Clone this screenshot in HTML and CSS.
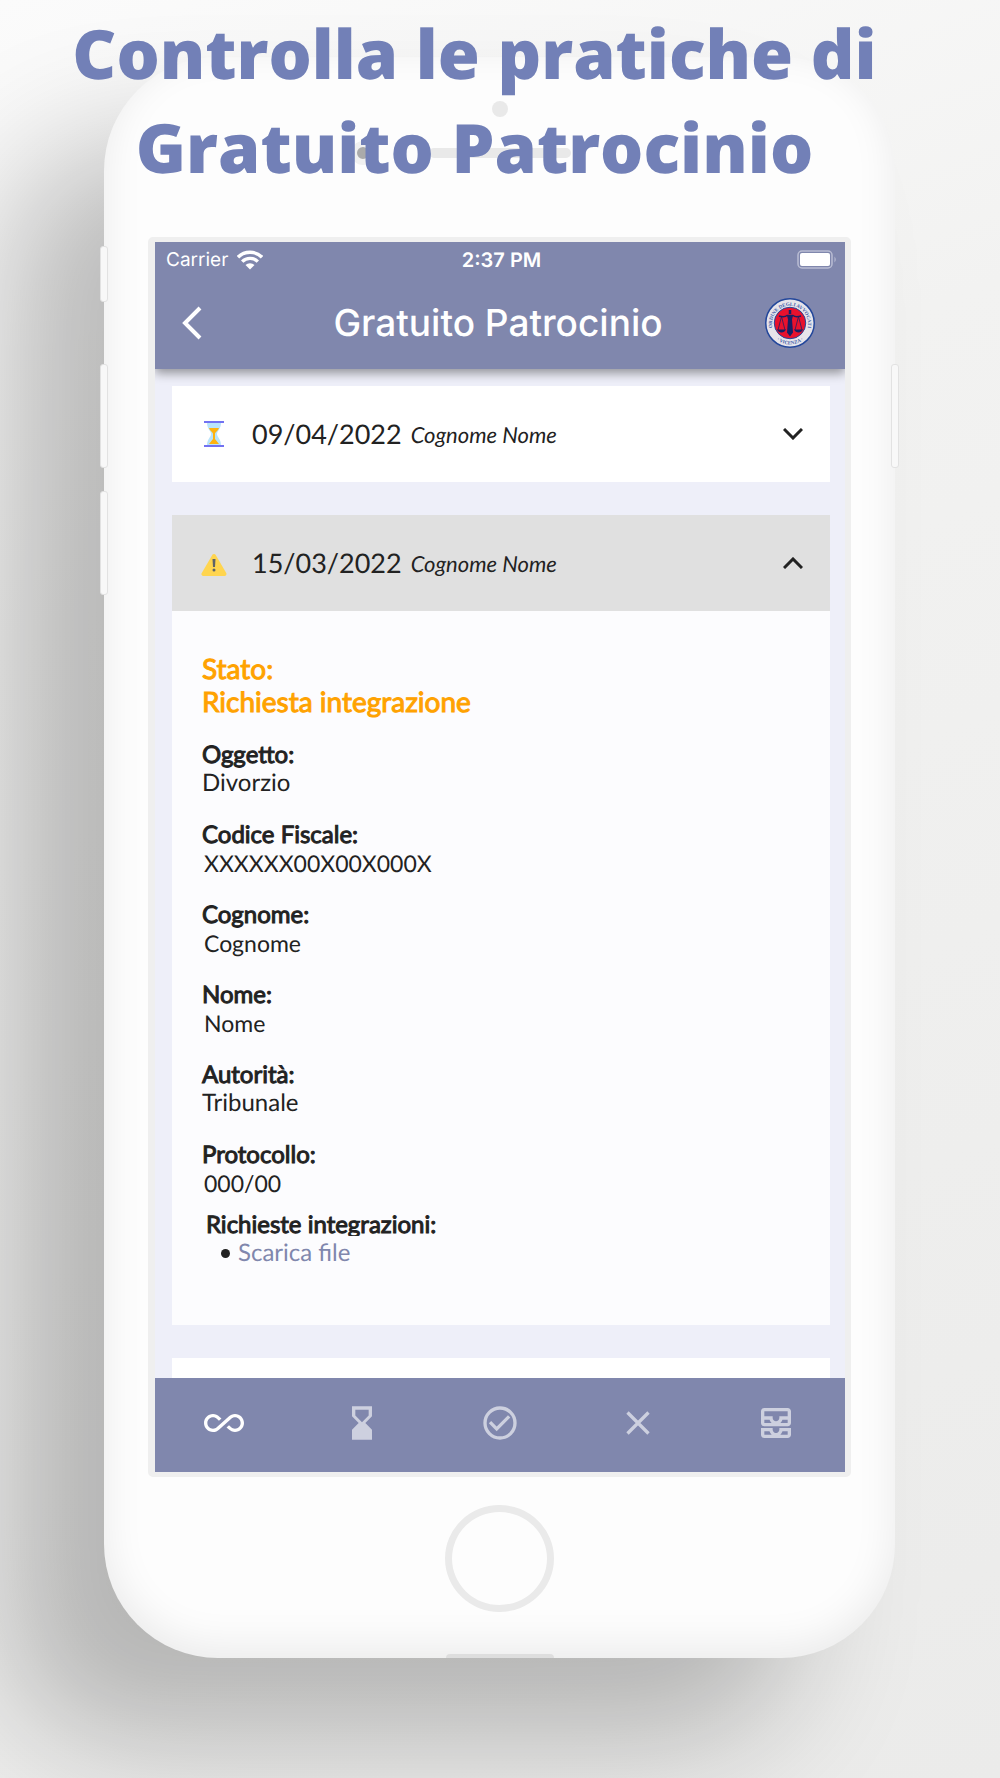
FILE: index.html
```html
<!DOCTYPE html>
<html lang="it">
<head>
<meta charset="utf-8">
<meta name="viewport" content="width=device-width, initial-scale=1">
<title>Gratuito Patrocinio</title>
<link rel="stylesheet" href="styles.css">
</head>
<body>
<main class="stage">
  <h1 class="headline">Controlla le pratiche di<br>Gratuito Patrocinio</h1>
  <div class="phone">
    <span class="key key-mute"></span>
    <span class="key key-up"></span>
    <span class="key key-down"></span>
    <span class="key key-power"></span>
    <div class="phone-top">
      <span class="sensor"></span>
      <div class="speaker-row">
        <span class="camera"></span>
        <span class="speaker"></span>
        <span></span>
      </div>
    </div>
    <div class="screen">
      <header class="app-header">
        <div class="status">
          <span class="carrier">Carrier
            <svg class="wifi" viewBox="0 0 26 20" aria-hidden="true"><path d="M1 7.200a17 17 0 0 1 24 0M5.200 11.600a11 11 0 0 1 15.600 0" fill="none" stroke="#fff" stroke-width="3.400"/><path d="M8.500 15a6.400 6.400 0 0 1 9 0L13 19.500z" fill="#fff"/></svg>
          </span>
          <span class="clock">2:37 PM</span>
          <svg class="battery" viewBox="0 0 40 20" aria-hidden="true"><rect x="1" y="1" width="34" height="17" rx="4" fill="none" stroke="#b9bdd3" stroke-width="1.500"/><rect x="3" y="3" width="30" height="13" rx="2" fill="#fff"/><path d="M37.500 6.500q2.500 3 0 6z" fill="#b9bdd3"/></svg>
        </div>
        <div class="title-bar">
          <button class="icon-button back" type="button" aria-label="Indietro"><svg viewBox="0 0 22 34"><path d="M19 2L4 17l15 15" fill="none" stroke="#fff" stroke-width="4"/></svg></button>
          <h2 class="title">Gratuito Patrocinio</h2>
          <svg class="emblem" viewBox="0 0 100 100" role="img" aria-label="Ordine degli Avvocati Vicenza">
            <defs>
              <path id="arc-top" d="M15 60A36 36 0 1 1 85 60"/>
              <path id="arc-bottom" d="M12 70A43 43 0 0 0 88 70"/>
            </defs>
            <circle cx="50" cy="50" r="48.500" fill="#e6e4ea" stroke="#23479b" stroke-width="3"/>
            <circle cx="50" cy="50" r="31.500" fill="#e8112d" stroke="#23479b" stroke-width="2"/>
            <g fill="none" stroke="#181f63">
              <path d="M50 24v8" stroke-width="5"/>
              <path d="M28 36q11 3 16-1h12q5 4 16 1" stroke-width="3"/>
              <path d="M33 37l-7 27M33 37l7 27M67 37l-7 27M67 37l7 27" stroke-width="1.500"/>
            </g>
            <path d="M44 35h12l-2 8 2 26-6 8-6-8 2-26zM24 63h18q-3 6-9 6t-9-6zM58 63h18q-3 6-9 6t-9-6z" fill="#181f63"/>
            <text class="emblem-text"><textPath href="#arc-top" startOffset="50%" text-anchor="middle">ORDINE DEGLI AVVOCATI</textPath></text>
            <text class="emblem-text"><textPath href="#arc-bottom" startOffset="50%" text-anchor="middle">· VICENZA ·</textPath></text>
          </svg>
        </div>
      </header>

      <section class="cases">
        <article class="case">
          <button class="case-head" type="button" aria-expanded="false">
            <svg class="case-icon" viewBox="0 0 26 26" aria-hidden="true"><path d="M6 2h14c0 6-4 8-4 11s4 5 4 11H6c0-6 4-8 4-11S6 8 6 2z" fill="#b9e4fb"/><path d="M8 7h10c-1 3-4 4-4 6v5l4 5H8l4-5v-5c0-2-3-3-4-6z" fill="#ffb30f"/><path d="M3 0h20v2H3zM3 24h20v2H3z" fill="#7272f2"/></svg>
            <span class="case-date">09/04/2022</span>
            <em class="case-name">Cognome Nome</em>
            <svg class="chevron" viewBox="0 0 20 12" aria-hidden="true"><path d="M1 1l9 9 9-9" fill="none" stroke="#222" stroke-width="3"/></svg>
          </button>
        </article>

        <article class="case">
          <button class="case-head is-open" type="button" aria-expanded="true" aria-controls="case-detail">
            <svg class="case-icon" viewBox="0 0 26 26" aria-hidden="true"><path d="M13 6L2.500 24h21z" fill="#ffd54f" stroke="#ffd54f" stroke-width="4" stroke-linejoin="round"/><path d="M11.500 9h3l-.5 8h-2z" fill="#5f6368"/><circle cx="13" cy="20" r="1.500" fill="#5f6368"/></svg>
            <span class="case-date">15/03/2022</span>
            <em class="case-name">Cognome Nome</em>
            <svg class="chevron" viewBox="0 0 20 12" aria-hidden="true"><path d="M1 11l9-9 9 9" fill="none" stroke="#222" stroke-width="3"/></svg>
          </button>
          <div class="detail" id="case-detail">
            <p class="state">Stato:<br>Richiesta integrazione</p>
            <dl class="fields">
              <div><dt>Oggetto:</dt><dd>Divorzio</dd></div>
              <div><dt>Codice Fiscale:</dt><dd class="masked">XXXXXX00X00X000X</dd></div>
              <div><dt>Cognome:</dt><dd class="masked">Cognome</dd></div>
              <div><dt>Nome:</dt><dd class="masked">Nome</dd></div>
              <div><dt>Autorità:</dt><dd>Tribunale</dd></div>
              <div><dt>Protocollo:</dt><dd class="masked">000/00</dd></div>
            </dl>
            <div class="requests">
              <h3 class="requests-title">Richieste integrazioni:</h3>
              <ul class="files"><li><a href="#file">Scarica file</a></li></ul>
            </div>
          </div>
        </article>
        <article class="case case-next"></article>
      </section>

      <nav class="tabs">
        <button class="tab is-active" type="button" aria-label="Tutte"><svg viewBox="0 0 24 24"><path d="M18.600 6.620c-1.440 0-2.800.56-3.770 1.530L12 10.660 10.480 12h.01L7.800 14.390c-.64.64-1.490.99-2.400.99-1.870 0-3.390-1.510-3.390-3.380S3.530 8.620 5.400 8.620c.91 0 1.760.35 2.440 1.030l1.130 1 1.510-1.340L9.220 8.200C8.200 7.180 6.840 6.620 5.400 6.620 2.420 6.620 0 9.040 0 12s2.420 5.380 5.400 5.380c1.440 0 2.800-.56 3.770-1.530l2.830-2.500.01.01L13.520 12h-.01l2.690-2.390c.64-.64 1.490-.99 2.400-.99 1.870 0 3.390 1.510 3.390 3.380s-1.520 3.380-3.390 3.380c-.9 0-1.760-.35-2.440-1.030l-1.140-1.010-1.510 1.340 1.270 1.120c1.020 1.010 2.370 1.570 3.820 1.570 2.980 0 5.400-2.410 5.400-5.380s-2.420-5.370-5.400-5.370z" fill="currentColor"/></svg></button>
        <button class="tab" type="button" aria-label="In attesa"><svg viewBox="0 0 24 24"><path d="M18 22l-.01-6L14 12l3.990-4.010L18 2H6v6l4 4-4 3.990V22h12zM8 7.500V4h8v3.500l-4 4-4-4z" fill="currentColor"/></svg></button>
        <button class="tab" type="button" aria-label="Approvate"><svg viewBox="0 0 24 24" fill="none" stroke="currentColor" stroke-width="2"><circle cx="12" cy="12" r="9"/><path d="M6 11.500l4 4L17.500 8"/></svg></button>
        <button class="tab" type="button" aria-label="Respinte"><svg viewBox="0 0 24 24"><path d="M5.700 5.700l12.600 12.600M18.300 5.700L5.700 18.300" stroke="currentColor" stroke-width="2"/></svg></button>
        <button class="tab" type="button" aria-label="Archivio"><svg viewBox="0 0 24 24"><path d="M19 3H5c-1.100 0-2 .9-2 2v7c0 1.100.9 2 2 2h14c1.100 0 2-.9 2-2V5c0-1.100-.9-2-2-2zM5 10h3.130c.21.78.67 1.470 1.270 2H5v-2zm14 2h-4.400c.6-.53 1.060-1.220 1.270-2H19v2zm0-4h-5v1c0 1.070-.93 2-2 2s-2-.93-2-2V8H5V5h14v3zm-2 7h-3v1c0 .47-.19.9-.48 1.250-.37.45-.92.75-1.520.75s-1.150-.3-1.520-.75c-.29-.35-.48-.78-.48-1.250v-1H3v4c0 1.100.9 2 2 2h14c1.100 0 2-.9 2-2v-4h-4zM5 17h3.130c.02.09.06.17.09.25.24.68.65 1.280 1.180 1.750H5v-2zm14 2h-4.400c.54-.47.95-1.070 1.180-1.750.03-.08.07-.16.09-.25H19v2z" fill="currentColor"/></svg></button>
      </nav>
    </div>
    <div class="phone-bottom"><span class="home"></span><span class="port"></span></div>
  </div>
</main>
</body>
</html>
```
FILE: styles.css
```css
* { box-sizing: border-box; }

body {
  margin: 0;
  font-family: Lato, sans-serif;
  color: #222;
  text-rendering: geometricPrecision;
  background: linear-gradient(160deg, #fbfbfb 0%, #f2f2f1 30%, #ebebea 100%);
}

button {
  border: 0;
  padding: 0;
  background: none;
  color: inherit;
  font: inherit;
  text-rendering: inherit;
}

svg { display: block; }

.stage {
  display: grid;
  padding: 0 105px 120px 104px;
  overflow: hidden;
}

.headline, .phone { grid-area: 1 / 1; }

.headline {
  z-index: 1;
  justify-self: center;
  align-self: start;
  margin: 6px -60px 0 -110px;
  font: 800 68px/94px "Open Sans", sans-serif;
  color: #7280b7;
  text-align: center;
  white-space: nowrap;
}

.phone {
  position: relative;
  margin-top: 57px;
  padding: 0 44px;
  border-radius: 114px;
  background: #fdfdfd;
  box-shadow:
    inset 0 -10px 40px rgba(0, 0, 0, .08),
    -100px 84px 130px -4px rgba(0, 0, 0, .24);
}

.key {
  position: absolute;
  left: -4px;
  width: 8px;
  height: 104px;
  border: 1px solid #e2e2e2;
  border-radius: 3px;
  background: #f8f8f8;
}
.key-mute { top: 189px; height: 56px; }
.key-up { top: 307px; }
.key-down { top: 434px; }
.key-power { top: 307px; left: auto; right: -4px; }

.phone-top {
  display: flex;
  flex-direction: column;
  align-items: center;
  gap: 24px;
  height: 180px;
  padding-top: 44px;
}
.sensor {
  width: 16px;
  height: 16px;
  border-radius: 50%;
  background: #e9e9e9;
}
.speaker-row {
  display: grid;
  grid-template-columns: 24px 142px 24px;
  justify-content: center;
  align-items: center;
  gap: 54px;
}
.camera {
  width: 24px;
  height: 24px;
  border: 6px solid #f0f0f0;
  border-radius: 50%;
  background: #aaa;
}
.speaker {
  height: 10px;
  border-radius: 5px;
  background: #e9e9e9;
}

.screen {
  border: solid #efefef;
  border-width: 5px 6px 5px 7px;
  border-radius: 5px;
  background: #eeeff9;
}

.app-header {
  position: relative;
  height: 127px;
  background: #8087ad;
  box-shadow: 0 4px 10px rgba(0, 0, 0, .4);
  clip-path: inset(0 0 -20px 0);
  color: #fff;
  font-family: Inter, sans-serif;
}
.status {
  display: grid;
  grid-template-columns: 1fr auto 1fr;
  align-items: center;
  height: 36px;
  padding: 0 8px 0 11px;
  font-size: 19px;
  line-height: 24px;
}
.carrier { display: flex; align-items: center; gap: 9px; }
.wifi { width: 26px; height: 20px; }
.clock { font-size: 20px; font-weight: 600; }
.battery { width: 40px; height: 20px; justify-self: end; }

.title-bar {
  display: grid;
  grid-template-columns: 50px 1fr 50px;
  align-items: center;
  height: 90px;
  padding: 0 30px 0 26px;
}
.back { width: 22px; height: 34px; }
.title {
  margin: 0;
  font-size: 37px;
  font-weight: 500;
  line-height: 48px;
  text-align: center;
  white-space: nowrap;
}
.emblem { width: 50px; height: 50px; }
.emblem-text {
  font: 700 10px "Liberation Serif", serif;
  fill: #3c5dab;
}

.cases {
  display: flex;
  flex-direction: column;
  gap: 33px;
  padding: 17px 15px 0 17px;
}
.case { background: #fcfcfe; }
.case-next { height: 20px; background: #fff; }
.case-head {
  display: flex;
  align-items: center;
  width: 100%;
  height: 96px;
  padding: 0 27px 0 29px;
  background: #fff;
  text-align: left;
}
.case-head.is-open { background: #e0e0e0; }
.case-icon { width: 26px; height: 26px; margin-right: 25px; }
.case-date { margin-right: 9px; font-size: 27px; line-height: 34px; }
.case-name { padding-top: 2px; font-size: 22px; line-height: 34px; }
.chevron { width: 20px; height: 12px; margin-left: auto; }

.detail { padding: 41px 30px 58px; }
.state {
  margin: 0 0 23px;
  color: #ffa200;
  font-size: 28px;
  line-height: 33px;
  -webkit-text-stroke: 1px;
}
.fields {
  display: flex;
  flex-direction: column;
  gap: 24px;
  margin: 0;
  font-size: 24px;
  line-height: 28px;
}
.fields dt, .requests-title { -webkit-text-stroke: 1px; }
.fields dd { margin: 0; }
.fields .masked { padding-left: 2px; font-size: 23px; }

.requests {
  padding: 14px 0 0 4px;
  font-size: 24px;
  line-height: 28px;
}
.requests-title {
  height: 25px;
  margin: 0 0 3px;
  overflow: hidden;
  font-size: 24px;
  font-weight: 400;
  line-height: 28px;
}
.files {
  margin: 0;
  padding-left: 15px;
  list-style: none;
}
.files li { display: flex; align-items: center; gap: 8px; }
.files li::before {
  content: "";
  width: 9px;
  height: 9px;
  border-radius: 50%;
  background: #222;
}
.files a { color: #8087ad; text-decoration: none; }

.tabs {
  display: grid;
  grid-template-columns: repeat(5, 1fr);
  height: 94px;
  background: #8087ad;
  color: #cdd0df;
}
.tab { display: grid; place-items: center; padding-bottom: 4px; }
.tab svg { width: 40px; height: 40px; }
.tab.is-active { color: #fff; }

.phone-bottom {
  display: flex;
  flex-direction: column;
  align-items: center;
  justify-content: space-between;
  height: 181px;
  padding-top: 28px;
}
.home {
  width: 109px;
  height: 107px;
  border: 7px solid #eaeaea;
  border-radius: 50%;
}
.port {
  width: 108px;
  height: 4px;
  border-radius: 4px 4px 0 0;
  background: #dedede;
}
```
